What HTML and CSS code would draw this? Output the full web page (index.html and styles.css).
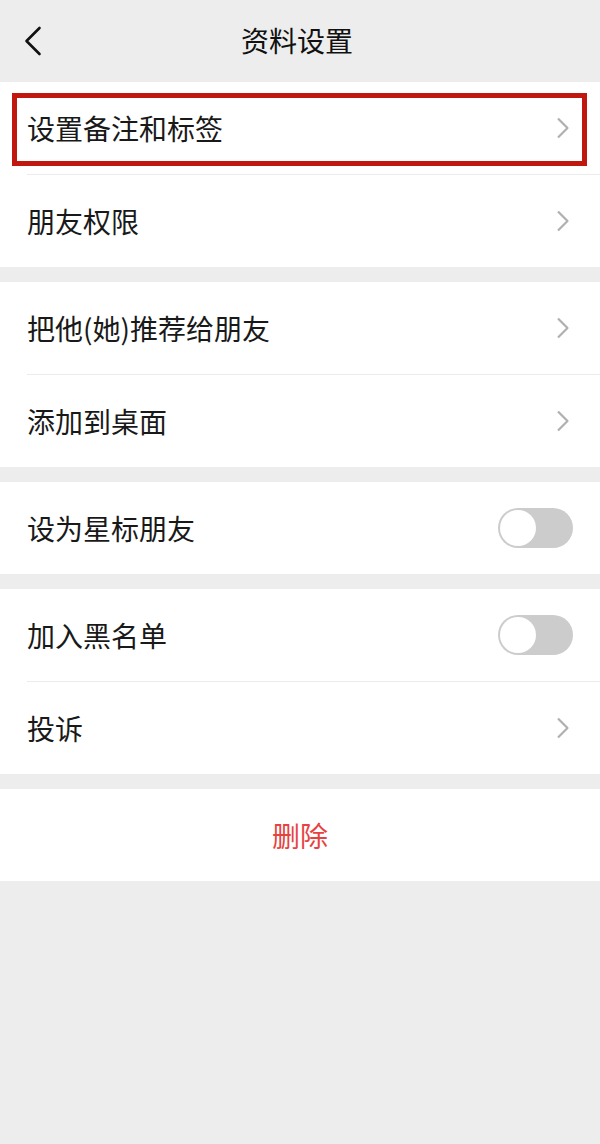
FILE: index.html
```html
<!DOCTYPE html>
<html lang="zh-CN">
<head>
<meta charset="utf-8">
<title>资料设置</title>
<link rel="stylesheet" href="styles.css">
</head>
<body>
<div class="page">
  <header class="topbar">
    <span class="back">
      <svg width="18" height="30" viewBox="0 0 18 30"><polyline points="15.5,2 2.5,15 15.5,28" fill="none" stroke="#111" stroke-width="2.6" stroke-linecap="round" stroke-linejoin="round"/></svg>
    </span>
    <h1 class="title">资料设置</h1>
  </header>

  <section class="group">
    <div class="row">
      <span class="label">设置备注和标签</span>
      <svg class="chev" width="14" height="22" viewBox="0 0 14 22"><polyline points="2,1.5 11.5,11 2,20.5" fill="none" stroke="#b0b0b0" stroke-width="2.2" stroke-linejoin="round"/></svg>
      <span class="mark"></span>
    </div>
    <div class="row">
      <span class="label">朋友权限</span>
      <svg class="chev" width="14" height="22" viewBox="0 0 14 22"><polyline points="2,1.5 11.5,11 2,20.5" fill="none" stroke="#b0b0b0" stroke-width="2.2" stroke-linejoin="round"/></svg>
    </div>
  </section>

  <section class="group">
    <div class="row">
      <span class="label">把他(她)推荐给朋友</span>
      <svg class="chev" width="14" height="22" viewBox="0 0 14 22"><polyline points="2,1.5 11.5,11 2,20.5" fill="none" stroke="#b0b0b0" stroke-width="2.2" stroke-linejoin="round"/></svg>
    </div>
    <div class="row">
      <span class="label">添加到桌面</span>
      <svg class="chev" width="14" height="22" viewBox="0 0 14 22"><polyline points="2,1.5 11.5,11 2,20.5" fill="none" stroke="#b0b0b0" stroke-width="2.2" stroke-linejoin="round"/></svg>
    </div>
  </section>

  <section class="group">
    <div class="row">
      <span class="label">设为星标朋友</span>
      <span class="switch"><span class="knob"></span></span>
    </div>
  </section>

  <section class="group">
    <div class="row">
      <span class="label">加入黑名单</span>
      <span class="switch"><span class="knob"></span></span>
    </div>
    <div class="row">
      <span class="label">投诉</span>
      <svg class="chev" width="14" height="22" viewBox="0 0 14 22"><polyline points="2,1.5 11.5,11 2,20.5" fill="none" stroke="#b0b0b0" stroke-width="2.2" stroke-linejoin="round"/></svg>
    </div>
  </section>

  <section class="group">
    <div class="row danger">删除</div>
  </section>
</div>
</body>
</html>
```
FILE: styles.css
```css
* { box-sizing: border-box; }
html, body {
  margin: 0;
  padding: 0;
  background: #ededed;
}
body {
  font-family: "Noto Sans CJK SC", "Noto Sans", sans-serif;
  color: #191919;
}
.page {
  width: 600px;
  min-height: 1144px;
  background: #ededed;
  display: flex;
  flex-direction: column;
  gap: 15px;
}
.topbar {
  height: 82px;
  display: flex;
  align-items: center;
  justify-content: center;
  position: relative;
  margin-bottom: -15px;
}
.back {
  position: absolute;
  left: 24px;
  top: 26px;
  display: block;
  line-height: 0;
}
.title {
  margin: 0 6px 0 0;
  font-size: 28px;
  font-weight: 400;
  line-height: 1;
  color: #111;
  padding-bottom: 2px;
}
.group {
  background: #fff;
  display: flex;
  flex-direction: column;
}
.row {
  height: 92px;
  display: flex;
  align-items: center;
  justify-content: space-between;
  padding-left: 27px;
  padding-right: 27px;
  position: relative;
  font-size: 28px;
}
.row + .row {
  height: 93px;
}
.row + .row::after {
  content: "";
  position: absolute;
  top: 0;
  left: 27px;
  right: 0;
  height: 1px;
  background: #ebebeb;
}
.label {
  line-height: 1;
}
.chev {
  display: block;
  margin-right: 3px;
}
.mark {
  position: absolute;
  left: 12px;
  top: 11px;
  right: 13px;
  bottom: 8px;
  border: 5px solid #c0170f;
  pointer-events: none;
}
.switch {
  width: 75px;
  height: 40px;
  border-radius: 20px;
  background: #cccccc;
  position: relative;
  display: block;
}
.knob {
  position: absolute;
  left: 2px;
  top: 2px;
  width: 36px;
  height: 36px;
  border-radius: 50%;
  background: #fff;
}
.danger {
  justify-content: center;
  color: #e64340;
  padding: 0;
}
```
